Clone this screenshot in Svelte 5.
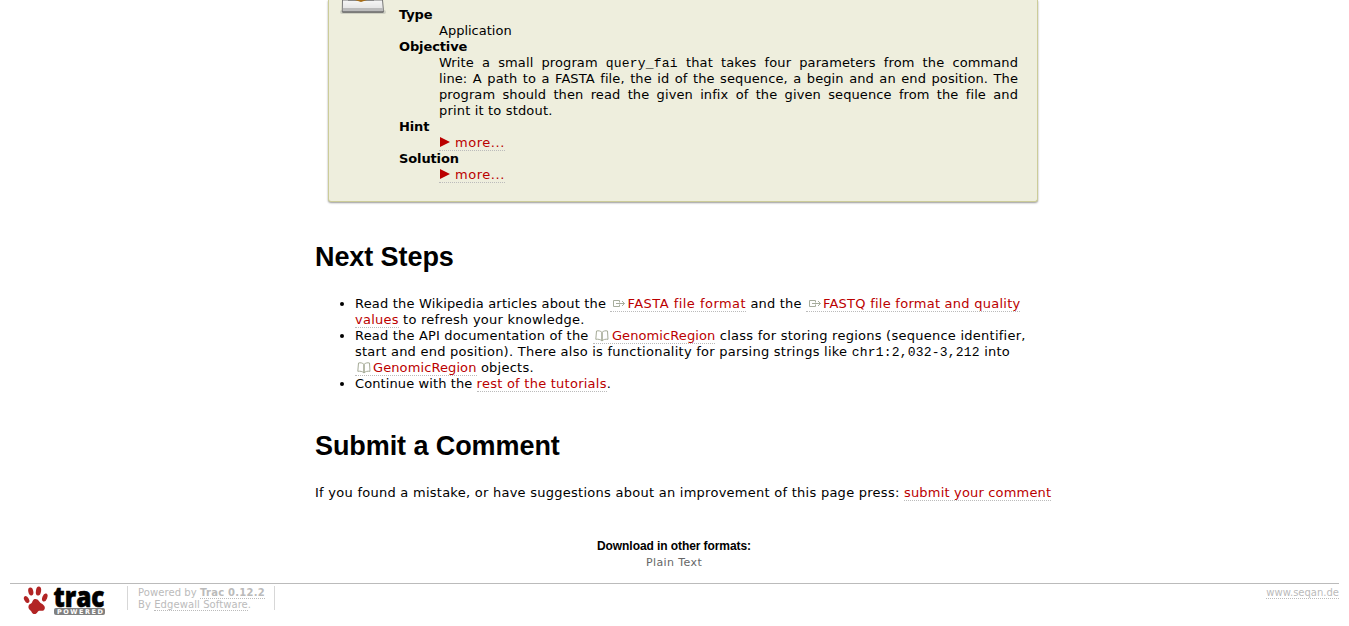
{#snippet ext()}<svg class="ext" width="14" height="8" viewBox="0 0 14 8"><path d="M7.500 2.500V.5h-6v6h6v-2M4 3.500h8.500M10 1l2.500 2.500L10 6" fill="none" stroke="#a7ad9d" /></svg>{/snippet}
{#snippet book()}<svg class="book" width="14" height="12" viewBox="0 0 14 12"><path d="M7 2.500C5.500 .8 3.500 .5 1.500 1L.8 9.300C3 9 5.500 9.300 7 11 8.500 9.300 10.500 9 13 9.300L12.500 1C10.500 .5 8.500 .8 7 2.500z" fill="#fff" stroke="#a5aa96" /><path d="M6.200 2.500h1.600v8H6.200z" fill="#a5aa96" /></svg>{/snippet}

<main>
  <section class="task">
    <svg class="disk" width="46" height="16" viewBox="0 0 46 16">
      <defs><linearGradient id="g" x2="0" y2="1"><stop offset="0" stop-color="#f6f6f6" /><stop offset="1" stop-color="#dedede" /></linearGradient></defs>
      <rect x="0" y="10" width="46" height="4" rx="2" fill="#cfd0c3" />
      <path d="M2.500 0h40l.8 9v3h-41V9z" fill="url(#g)" stroke="#777" />
      <path d="M3 8h40v3H3z" fill="#bbb" />
      <path d="M2.500 12h41" stroke="#555" />
      <path d="M8 0h26v1H8z" fill="#888" /><path d="M15 0h12l-6 2z" fill="#a66d18" />
    </svg>
    <dl>
      <dt>Type</dt>
      <dd>Application</dd>
      <dt>Objective</dt>
      <dd class="objective">
        <div>Write a small program <code>query_fai</code> that takes four parameters from the command</div>
        <div>line: A path to a FASTA file, the id of the sequence, a begin and an end position. The</div>
        <div>program should then read the given infix of the given sequence from the file and</div>
        <div class="last">print it to stdout.</div>
      </dd>
      <dt>Hint</dt>
      <dd><a class="more" href="#hint"><i class="tri"></i>more...</a></dd>
      <dt>Solution</dt>
      <dd><a class="more" href="#solution"><i class="tri"></i>more...</a></dd>
    </dl>
  </section>

  <h1>Next Steps</h1>
  <ul>
    <li class="s18">Read the Wikipedia articles about the <a class="s47" href="#fasta">{@render ext()}FASTA file format</a> and the <a class="s25" href="#fastq">{@render ext()}FASTQ file format and quality<br />values</a> <span class="s25">to refresh your knowledge.</span></li>
    <li class="s25"><span class="s18">Read the API documentation of the</span> <a class="s10 first" href="#region">{@render book()}GenomicRegion</a> class for storing regions (sequence identifier,<br />start and end position). There also is functionality for parsing strings like <code>chr1:2,032-3,212</code> into<br /><a class="s10" href="#region">{@render book()}GenomicRegion</a> objects.</li>
    <li class="s10">Continue with the <a class="s25" href="#tutorials">rest of the tutorials</a>.</li>
  </ul>

  <h1 class="comment">Submit a Comment</h1>
  <p class="press">If you found a mistake, or have suggestions about an improvement of this page press: <a class="s18" href="#comment">submit your comment</a></p>
</main>

<div class="formats">
  <h3>Download in other formats:</h3>
  <span>Plain Text</span>
</div>

<footer>
  <svg class="logo" width="106" height="30" viewBox="0 0 106 30">
    <g fill="#b22424">
      <ellipse cx="8.800" cy="5.500" rx="2.500" ry="4" transform="rotate(-12 8.800 5.500)" />
      <ellipse cx="16.500" cy="5" rx="2.600" ry="4.600" transform="rotate(8 16.500 5)" />
      <ellipse cx="4.600" cy="13.500" rx="2.300" ry="3.800" transform="rotate(-28 4.600 13.500)" />
      <ellipse cx="22.800" cy="11.500" rx="2.400" ry="4.200" transform="rotate(22 22.800 11.500)" />
      <path d="M13.500 13c3 0 3.500 3 6 4.500 3.500 2 4.500 5 2 7-1.500 1-3.500-.5-5 .5-1.500 1-1.500 3-4 3-2.500 0-2.500-2-3.500-3-1.500-1.500-3-2.500-2.500-5 .5-2 2.500-2 3.500-3.500.8-1.500 1-3.500 3.500-3.500z" />
    </g>
    <text x="31.500" y="20.500" class="trac" textLength="51" lengthAdjust="spacingAndGlyphs">trac</text>
    <rect x="32" y="22" width="51" height="7" rx="2" fill="#808080" />
    <text x="35" y="28" class="powered" textLength="46">POWERED</text>
  </svg>
  <div class="powered-by"><span>Powered by <a href="#trac"><b>Trac 0.12.2</b></a></span><span>By <a href="#edgewall">Edgewall Software</a>.</span></div>
  <a class="site" href="#seqan">www.seqan.de</a>
</footer>

<style>
  :global(body) { background: #fff; color: #000; font: 13px/16px "DejaVu Sans", Verdana, sans-serif; overflow: hidden; }
  main { width: 740px; margin-left: 315px; white-space: nowrap; }
  .task { display: flex; box-sizing: border-box; width: 710px; height: 202px; margin-left: 13px; padding: 0 19px 0 11px; background: #eeeedd; border: 1px solid #cccc99; border-top: 0; border-radius: 0 0 3px 3px; box-shadow: 0 1px 2px #999; }
  .disk { flex: none; }
  dl { margin: 7px 0 0 13px; flex: 1; }
  dt { font-weight: bold; letter-spacing: -.12px; }
  dd { margin: 0 0 0 40px; }
  .objective div { text-align-last: justify; white-space: normal; letter-spacing: .1px; }
  .objective .last { text-align-last: left; letter-spacing: .17px; }
  code { font: 13px/12px "Liberation Mono", monospace; letter-spacing: .2px; }
  a { color: #b00; text-decoration: none; border-bottom: 1px dotted #bbb; }
  .s10 { letter-spacing: .1px; }
  .s18 { letter-spacing: .18px; }
  .s25 { letter-spacing: .25px; }
  .s47 { letter-spacing: .47px; }
  .press { letter-spacing: .26px; }
  .more { letter-spacing: .55px; }
  .tri { display: inline-block; border: solid transparent; border-width: 5.5px 0 5.5px 10px; border-left-color: #b00; margin: 0 5px 0 1px; }
  .ext { margin: 0 1px 0 2px; }
  .book { margin: 0 2px -2px 2px; }
  .first .book { margin-right: 3px; }
  h1 { font: bold 27px/32px "Liberation Sans", Arial, sans-serif; letter-spacing: -.08px; margin: 39px 0 23px; }
  ul { margin: 0; padding-left: 40px; }
  .comment { margin-top: 38px; }
  p { margin: 0; }
  .formats { margin: 37px 1px 0 0; text-align: center; font-size: 11px; line-height: 17px; letter-spacing: .4px; color: #666; }
  h3 { margin: 0; color: #000; font: bold 12px/16px "Liberation Sans", Arial, sans-serif; letter-spacing: -.08px; }
  footer { display: flex; margin: 12px 10px 0; border-top: 1px solid #bbb; color: #bbb; font-size: 10px; line-height: 12px; padding-top: 2px; }
  footer a { color: #bbb; }
  .logo { margin-left: 12px; flex: none; overflow: visible; }
  .powered-by { box-sizing: border-box; display: flex; flex-direction: column; margin-left: -1px; height: 24px; border: solid #d7d7d7; border-width: 0 1px; padding: 1px 9px 0 10px; white-space: nowrap; letter-spacing: .08px; }
  .powered-by b { letter-spacing: .25px; }
  .site { margin: 1px 0 0 auto; height: 11px; }
  .trac { font: 800 28px "Open Sans", sans-serif; fill: #000; stroke: #000; stroke-width: .6px; }
  .powered { font: bold 6.5px "DejaVu Sans", sans-serif; fill: #fff; }
</style>
